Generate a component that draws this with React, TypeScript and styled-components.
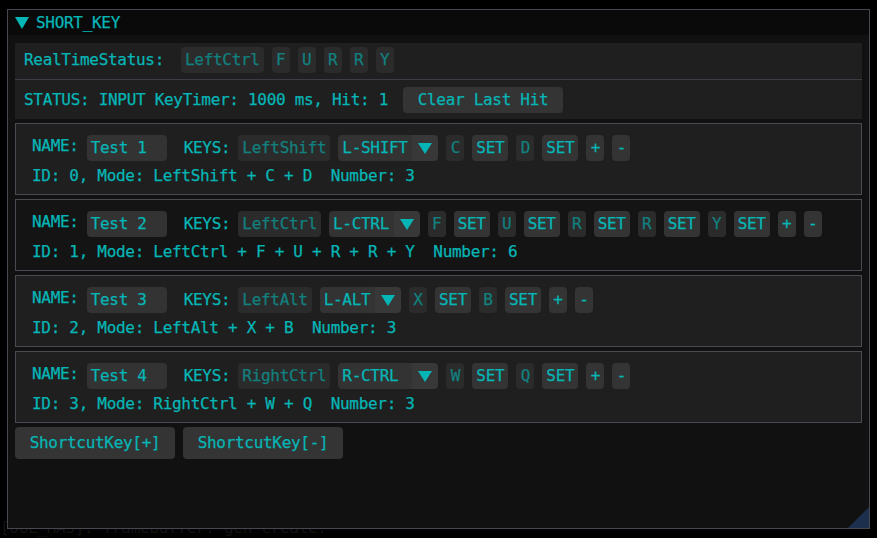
import React from "react";
import styled, { createGlobalStyle } from "styled-components";

const CYAN = "#06b6b6";
const DIM = "#12807f";
const CH = 9.33;

const GlobalStyle = createGlobalStyle`
  html, body { margin: 0; padding: 0; background: #000; }
  body {
    font-family: "DejaVu Sans Mono", "Liberation Mono", monospace;
    font-size: 16px;
    letter-spacing: -0.3px;
    line-height: 18px;
    color: ${CYAN};
    -webkit-text-stroke: 0.25px currentColor;
  }
  * { box-sizing: border-box; }
`;

const Desktop = styled.main`
  position: relative;
  width: 877px;
  height: 538px;
  overflow: hidden;
  display: flex;
  flex-direction: column;
  justify-content: flex-end;
`;

const ConsoleLine = styled.div`
  color: #131313;
  -webkit-text-stroke: 0;
  white-space: pre;
  line-height: 18px;
  margin-bottom: 1px;
`;

const Window = styled.section`
  position: absolute;
  left: 7px;
  top: 9px;
  width: 863px;
  height: 520px;
  border: 1px solid #47474f;
  background: #111111;
  display: flex;
  flex-direction: column;
`;

const TitleBar = styled.header`
  height: 25px;
  flex: none;
  background: #0a0a0a;
  display: flex;
  align-items: center;
  gap: 7px;
  padding-left: 7px;
`;

const Caret = styled.span`
  width: 0;
  height: 0;
  border-left: 7px solid transparent;
  border-right: 7px solid transparent;
  border-top: 12px solid ${CYAN};
`;

const Body = styled.div`
  padding: 8px 7px 0 7px;
  display: flex;
  flex-direction: column;
  gap: 4px;
`;

const StatusPanel = styled.div`
  background: #1f1f1f;
  padding: 4px 0 6px;
  display: flex;
  flex-direction: column;
`;

const Row = styled.div<{ $gap?: number }>`
  display: flex;
  align-items: center;
  height: 26px;
  gap: ${(p) => p.$gap ?? 8}px;
`;

const StatusRow = styled(Row)`
  padding-left: 9px;
`;

const Separator = styled.div`
  height: 1px;
  background: #3d3d45;
  margin: 6px 0 7px;
`;

const Label = styled.span<{ $after?: number; $before?: number; $raised?: boolean }>`
  white-space: pre;
  margin-right: ${(p) => p.$after ?? 0}px;
  margin-left: ${(p) => p.$before ?? 0}px;
  align-self: ${(p) => (p.$raised ? "flex-start" : "center")};
  margin-top: ${(p) => (p.$raised ? "2px" : "0")};
`;

const Box = styled.span`
  height: 26px;
  line-height: 26px;
  min-width: 18px;
  padding: 0 4px;
  border-radius: 4px;
  text-align: center;
  white-space: pre;
`;

const KeyBox = styled(Box)`
  background: #2b2b2b;
  color: ${DIM};
`;

const Button = styled(Box)<{ $width?: number; $height?: number }>`
  background: #343434;
  color: ${CYAN};
  width: ${(p) => (p.$width ? `${p.$width}px` : "auto")};
  height: ${(p) => p.$height ?? 26}px;
  line-height: ${(p) => p.$height ?? 26}px;
`;

const NameInput = styled(Box)`
  width: 80px;
  background: #333333;
  text-align: left;
`;

const Combo = styled.span<{ $chars: number }>`
  display: flex;
  height: 26px;
  width: ${(p) => p.$chars * CH + 16}px;
  border-radius: 4px;
  overflow: hidden;
`;

const ComboValue = styled.span`
  flex: 1;
  background: #333333;
  padding: 0 4px;
  line-height: 26px;
  white-space: pre;
`;

const ComboArrow = styled.span`
  width: 26px;
  background: #383838;
  display: flex;
  align-items: center;
  justify-content: center;
  &::after {
    content: "";
    width: 0;
    height: 0;
    border-left: 7px solid transparent;
    border-right: 7px solid transparent;
    border-top: 11px solid ${CYAN};
  }
`;

const Card = styled.div<{ $dark?: boolean }>`
  height: 72px;
  border: 1px solid #4a4a52;
  background: ${(p) => (p.$dark ? "#141414" : "#1f1f1f")};
  padding: 11px 16px 9px;
  display: flex;
  flex-direction: column;
`;

const Info = styled.div`
  margin-top: 6px;
  white-space: pre;
`;

const Footer = styled.div`
  display: flex;
  gap: 8px;
`;

const ResizeGrip = styled.span`
  position: absolute;
  right: 0;
  bottom: 0;
  width: 21px;
  height: 21px;
  background: #1c2f4c;
  clip-path: polygon(100% 0, 100% 100%, 0 100%);
`;

type Shortcut = {
  name: string;
  key: string;
  combo: string;
  keys: string[];
  dark?: boolean;
};

const shortcuts: Shortcut[] = [
  { name: "Test 1", key: "LeftShift", combo: "L-SHIFT", keys: ["C", "D"] },
  { name: "Test 2", key: "LeftCtrl", combo: "L-CTRL", keys: ["F", "U", "R", "R", "Y"], dark: true },
  { name: "Test 3", key: "LeftAlt", combo: "L-ALT", keys: ["X", "B"] },
  { name: "Test 4", key: "RightCtrl", combo: "R-CTRL", keys: ["W", "Q"] },
];

const liveKeys = ["LeftCtrl", "F", "U", "R", "R", "Y"];

export default function App() {
  return (
    <>
      <GlobalStyle />
      <Desktop>
        <ConsoleLine>{"[OGL_HAS]: framebuffer: gen create."}</ConsoleLine>
        <Window>
          <TitleBar>
            <Caret />
            <span>SHORT_KEY</span>
          </TitleBar>
          <Body>
            <StatusPanel>
              <StatusRow>
                <Label $after={9}>RealTimeStatus:</Label>
                {liveKeys.map((k, i) => (
                  <KeyBox key={i}>{k}</KeyBox>
                ))}
              </StatusRow>
              <Separator />
              <StatusRow>
                <Label>STATUS: INPUT KeyTimer: 1000 ms, Hit: 1</Label>
                <Button $width={160} style={{ marginLeft: 7 }}>
                  Clear Last Hit
                </Button>
              </StatusRow>
            </StatusPanel>
            {shortcuts.map((s, idx) => (
              <Card key={idx} $dark={s.dark}>
                <Row>
                  <Label $raised>NAME:</Label>
                  <NameInput>{s.name}</NameInput>
                  <Label $before={9}>KEYS:</Label>
                  <KeyBox>{s.key}</KeyBox>
                  <Combo $chars={s.key.length}>
                    <ComboValue>{s.combo}</ComboValue>
                    <ComboArrow />
                  </Combo>
                  {s.keys.map((k, i) => (
                    <React.Fragment key={i}>
                      <KeyBox>{k}</KeyBox>
                      <Button>SET</Button>
                    </React.Fragment>
                  ))}
                  <Button>+</Button>
                  <Button>-</Button>
                </Row>
                <Info>
                  {`ID: ${idx}, Mode: ${s.key} + ${s.keys.join(" + ")}  Number: ${s.keys.length + 1}`}
                </Info>
              </Card>
            ))}
            <Footer>
              <Button $width={160} $height={32}>ShortcutKey[+]</Button>
              <Button $width={160} $height={32}>ShortcutKey[-]</Button>
            </Footer>
          </Body>
          <ResizeGrip />
        </Window>
      </Desktop>
    </>
  );
}
